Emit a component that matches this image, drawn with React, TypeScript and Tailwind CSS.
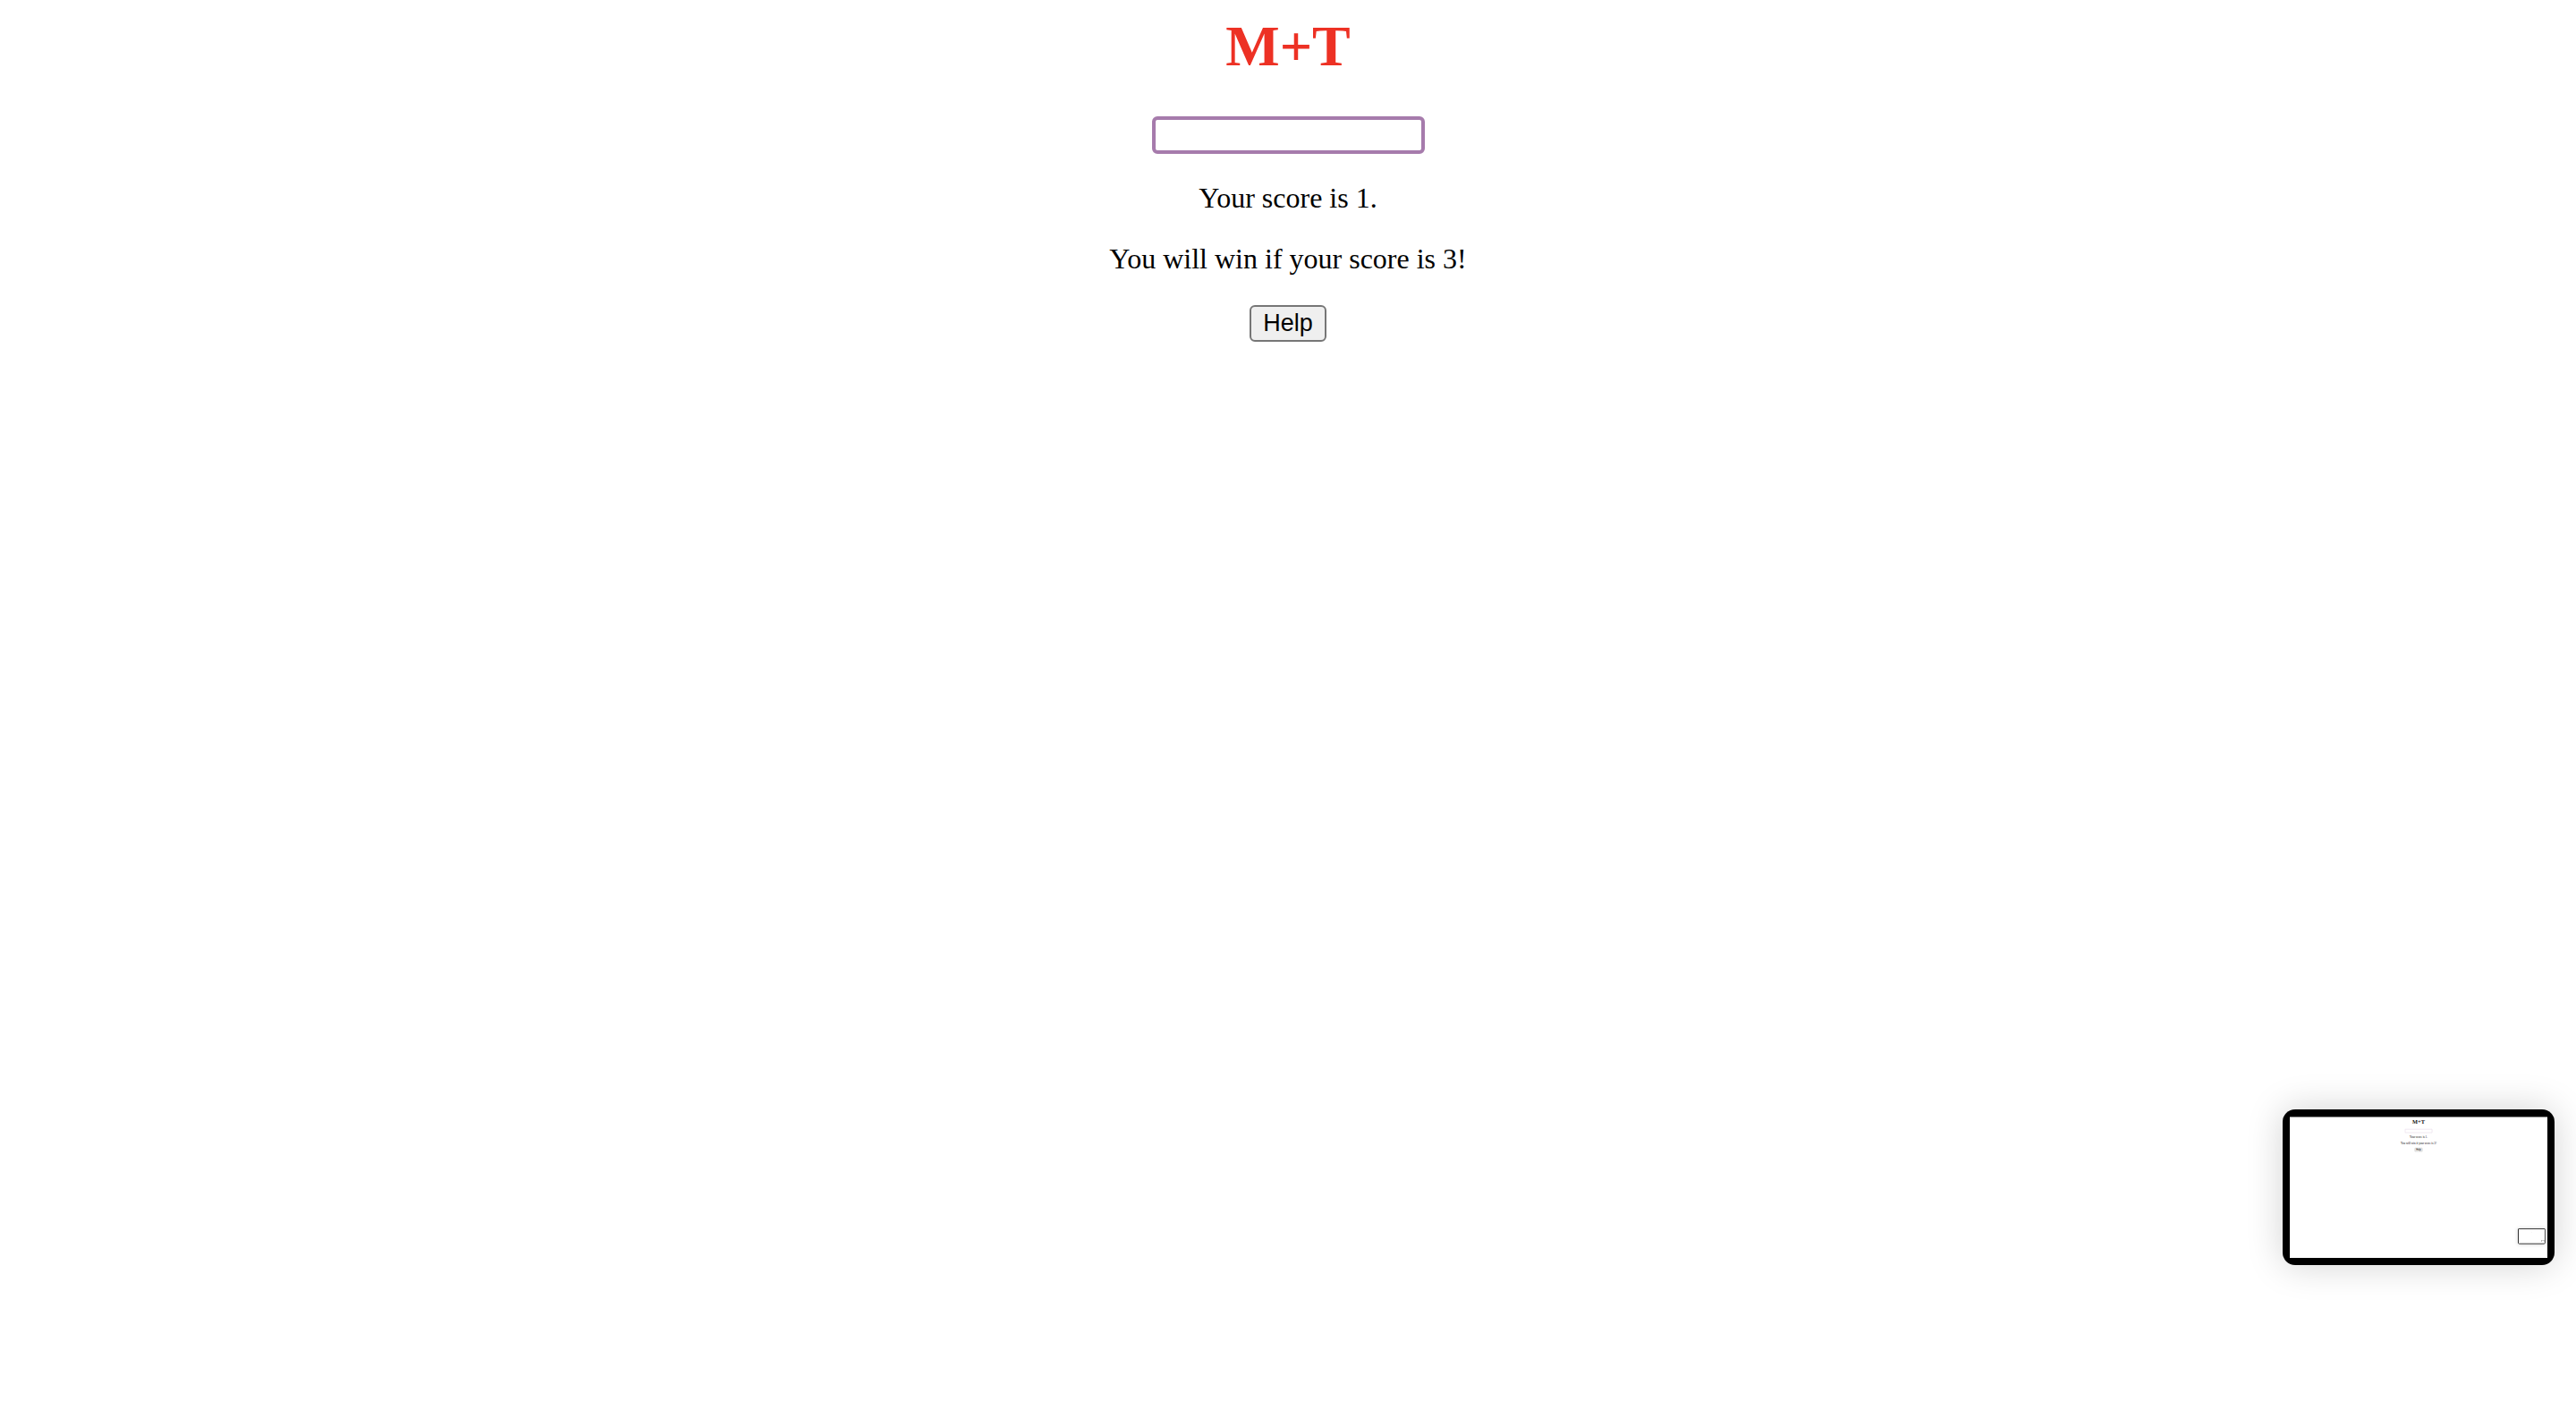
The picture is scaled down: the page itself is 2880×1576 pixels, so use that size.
import React from "react"

function Content({ mini }: { mini: boolean }) {
  return (
    <div className="flex flex-col items-center pt-[15px] text-black">
      <h1
        className={`font-['Liberation_Serif',serif] text-[64px] leading-[74px] font-bold ${
          mini ? "text-[#111]" : "text-[#ed3124]"
        }`}
      >
        M+T
      </h1>
      <input
        type="text"
        className={`mt-[41px] w-[305px] h-[42px] rounded-[6px] border-[4px] bg-white outline-none ${
          mini ? "border-[#d9c4dc]" : "border-[#a67bac]"
        }`}
      />
      <p className="mt-[31px] font-['Liberation_Serif',serif] text-[32px] leading-[37px]">Your score is 1.</p>
      <p className="mt-[31px] font-['Liberation_Serif',serif] text-[32px] leading-[37px]">You will win if your score is 3!</p>
      <button className="mt-[33px] w-[86px] h-[41px] rounded-[6px] border-2 border-[#767676] bg-[#efefef] font-['Liberation_Sans',Arial,sans-serif] text-[27px] leading-[31px] text-black">
        Help
      </button>
    </div>
  )
}

function Screen({ depth }: { depth: number }) {
  return (
    <div className="relative w-[2880px] h-[1576px] bg-white overflow-hidden">
      <Content mini={depth > 0} />
      {depth < 3 && (
        // minimap preview in the corner
        <div className="absolute right-[24px] bottom-[162px] w-[304px] h-[174px] rounded-[14px] bg-black p-[8px] shadow-[0_0_40px_rgba(0,0,0,0.18)]">
          <div className="w-[288px] h-[158px] overflow-hidden bg-white border-t border-[#888]">
            <div className="origin-top-left scale-[0.1]">
              <Screen depth={depth + 1} />
            </div>
          </div>
        </div>
      )}
    </div>
  )
}

export default function App() {
  return <Screen depth={0} />
}
